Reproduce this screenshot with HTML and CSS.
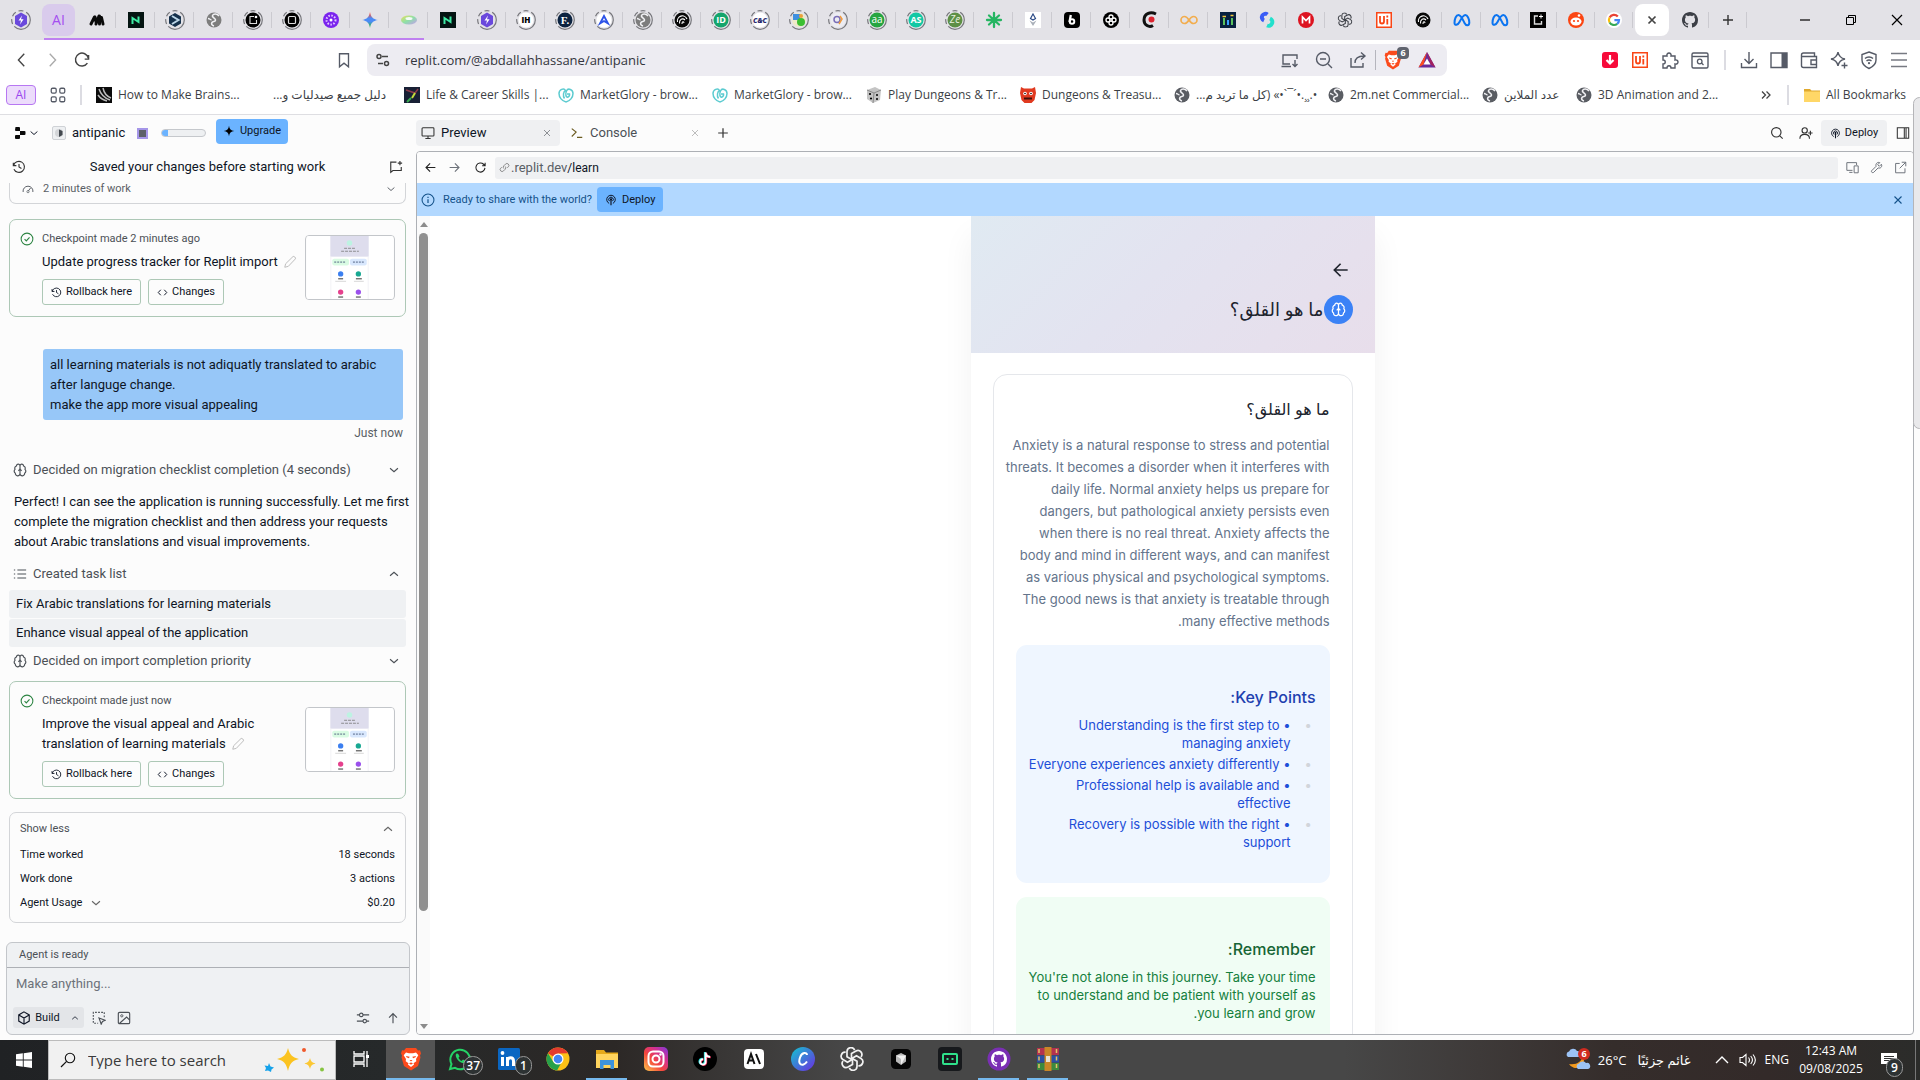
FILE: index.html
```html
<!DOCTYPE html>
<html lang="en">
<head>
<meta charset="utf-8">
<title>antipanic - Replit</title>
<link rel="stylesheet" href="styles.css">
</head>
<body>
<svg class="sprite" aria-hidden="true">
  <symbol id="ring" viewBox="0 0 20 20"><circle cx="10" cy="10" r="9.3" fill="none" stroke="#77777c" stroke-width="1.2" stroke-dasharray="22 3 5 3 5 3 5 3"/></symbol>
  <symbol id="globe" viewBox="0 0 20 20"><circle cx="10" cy="10" r="7.5" fill="currentColor"/><path d="M15 6c-2-2.500-5.500-2.500-6.500-.5s3 2.500 3 4.500-2.500 1-3.500 2.500 0 3 2 3.500" fill="none" stroke="#f1f1f4" stroke-width="1.600"/><path d="M4 8.500c1.500 0 2 1 3.500 1.500" fill="none" stroke="#f1f1f4" stroke-width="1.400"/></symbol>
  <symbol id="chev-down" viewBox="0 0 16 16"><path d="M3.500 6l4.500 4 4.500-4" fill="none" stroke="currentColor" stroke-width="1.300"/></symbol>
  <symbol id="chev-up" viewBox="0 0 16 16"><path d="M3.500 10l4.500-4 4.500 4" fill="none" stroke="currentColor" stroke-width="1.300"/></symbol>
  <symbol id="close" viewBox="0 0 16 16"><path d="M4 4l8 8M12 4l-8 8" fill="none" stroke="currentColor" stroke-width="1.300"/></symbol>
  <symbol id="plus" viewBox="0 0 16 16"><path d="M8 2.500v11M2.500 8h11" fill="none" stroke="currentColor" stroke-width="1.400"/></symbol>
  <symbol id="reload" viewBox="0 0 16 16"><path d="M13.500 8.500a5.600 5.600 0 1 1-1.700-4.500l1.700 1.600M13.700 2v3.800H10" fill="none" stroke="currentColor" stroke-width="1.300"/></symbol>
  <symbol id="arrow-left" viewBox="0 0 16 16"><path d="M14 8H2.500M7.500 3l-5 5 5 5" fill="none" stroke="currentColor" stroke-width="1.400"/></symbol>
  <symbol id="arrow-right" viewBox="0 0 16 16"><path d="M2 8h11.500M8.500 3l5 5-5 5" fill="none" stroke="currentColor" stroke-width="1.400"/></symbol>
  <symbol id="arrow-up" viewBox="0 0 16 16"><path d="M8 14V3M3.500 7.500L8 3l4.500 4.500" fill="none" stroke="currentColor" stroke-width="1.300"/></symbol>
  <symbol id="brain" viewBox="0 0 24 24"><path d="M12 5a3 3 0 1 0-5.997.125 4 4 0 0 0-2.526 5.770 4 4 0 0 0 .556 6.588A4 4 0 1 0 12 18ZM12 5a3 3 0 1 1 5.997.125 4 4 0 0 1 2.526 5.770 4 4 0 0 1-.556 6.588A4 4 0 1 1 12 18ZM9 13a4.500 4.500 0 0 0 3-4 4.500 4.500 0 0 0 3 4" fill="none" stroke="currentColor" stroke-width="2" stroke-linejoin="round"/></symbol>
  <symbol id="history" viewBox="0 0 16 16"><path d="M1.500 3v3.500H5M1.800 6.300A6.300 6.300 0 1 1 2.200 10.500M8 4.500V8l2.800 1.800" fill="none" stroke="currentColor" stroke-width="1.300"/></symbol>
  <symbol id="check" viewBox="0 0 16 16"><circle cx="8" cy="8" r="6.700" fill="none" stroke="currentColor" stroke-width="1.200"/><path d="M5.200 8.200l2 1.900 3.700-3.900" fill="none" stroke="currentColor" stroke-width="1.300"/></symbol>
  <symbol id="pencil" viewBox="0 0 16 16"><path d="M2 14l1-4L11.500 1.700c1-.7 3.500 1.500 2.700 2.700L6 13z" fill="none" stroke="currentColor" stroke-width="1.100"/></symbol>
  <symbol id="code" viewBox="0 0 16 16"><path d="M5.500 4L1.800 8l3.700 4M10.500 4l3.700 4-3.700 4" fill="none" stroke="currentColor" stroke-width="1.400"/></symbol>
  <symbol id="pin" viewBox="0 0 16 16"><path d="M5.500 12.500A5.700 5.700 0 1 1 10.500 12.500M6 9.500a3 3 0 1 1 4 0" fill="none" stroke="currentColor" stroke-width="1.300"/><path d="M8 6.500V15" stroke="currentColor" stroke-width="1.600"/><circle cx="8" cy="7" r="1.500" fill="currentColor"/></symbol>
  <symbol id="search" viewBox="0 0 16 16"><circle cx="7.200" cy="7.200" r="5.400" fill="none" stroke="currentColor" stroke-width="1.300"/><path d="M11.200 11.200l3.300 3.300" stroke="currentColor" stroke-width="1.300"/></symbol>
  <symbol id="brave" viewBox="0 0 24 24"><path d="M7 1h10l2 2.500 2-.3 1 3.300-1 2 .5 2-2.500 8.500L12 23.500 5 19 2.500 10.500 3 8.500 2 6.500l1-3.300 2 .3z" fill="#fb4a1c"/><path d="M7 5.500l3 .8h4l3-.8 2.300 2.800-2.300 3.700.3 2.200-2.800 2 .6 1.300L12 20l-3.100-2.500.6-1.300-2.800-2 .3-2.200-2.300-3.700z" fill="#fff"/><path d="M7 9l3.700.8-.8 1.500-2.400-1zM17 9l-3.700.8.8 1.500 2.400-1zM10.500 13h3l-1.500 1.500zM12 17.800l-2-1.500 2-.8 2 .8z" fill="#fb4a1c"/></symbol>
  <symbol id="github" viewBox="0 0 16 16"><path d="M8 0C3.580 0 0 3.580 0 8c0 3.540 2.290 6.530 5.470 7.590.4.070.55-.17.55-.38 0-.19-.01-.82-.01-1.490-2.010.37-2.530-.49-2.690-.94-.09-.23-.48-.94-.82-1.130-.28-.15-.68-.52-.01-.53.63-.01 1.080.58 1.230.82.72 1.210 1.870.87 2.330.66.07-.52.28-.87.51-1.070-1.780-.2-3.640-.89-3.640-3.950 0-.87.31-1.590.82-2.150-.08-.2-.36-1.020.08-2.120 0 0 .67-.21 2.200.82.640-.18 1.320-.27 2-.27s1.360.09 2 .27c1.530-1.040 2.200-.82 2.200-.82.440 1.100.160 1.920.080 2.120.51.560.82 1.270.82 2.150 0 3.070-1.870 3.750-3.650 3.950.29.25.54.73.54 1.480 0 1.070-.01 1.930-.01 2.200 0 .21.150.46.550.38A8.010 8.010 0 0 0 16 8c0-4.420-3.580-8-8-8z" fill="currentColor"/></symbol>
  <symbol id="gpt" viewBox="0 0 24 24"><g fill="none" stroke="currentColor" stroke-width="1.700"><path id="petal" d="M11.500 12.500V6.500l4.500-2.600a4 4 0 0 1 5 6"/><use href="#petal" transform="rotate(60 12 12)"/><use href="#petal" transform="rotate(120 12 12)"/><use href="#petal" transform="rotate(180 12 12)"/><use href="#petal" transform="rotate(240 12 12)"/><use href="#petal" transform="rotate(300 12 12)"/></g></symbol>
  <symbol id="meta" viewBox="0 0 20 20"><path d="M2.500 13c0-4 1.500-8 4-8s4.500 5 6 8 4.800 3 4.800-.5S15.500 5 13.300 5 9 9 7.500 12s-5 4-5 1z" fill="none" stroke="#0b74f1" stroke-width="2"/></symbol>
  <symbol id="bolt" viewBox="0 0 20 20"><path d="M10 2.500l6 3.500v8l-6 3.500L4 14V6z" fill="#6a49dc"/><path d="M11 5.500L7.500 10.500H10L9 14.500l3.600-5.200H10z" fill="#fff"/></symbol>
  <symbol id="nsq" viewBox="0 0 20 20"><path d="M2 2h16v16H2z" fill="#041412"/><path d="M6.500 14V8l6 4V6.500" fill="none" stroke="#3eeaa4" stroke-width="2"/></symbol>
  <symbol id="spiral" viewBox="0 0 20 20"><circle cx="10" cy="10" r="7.500" fill="#080808"/><path d="M5.500 12a5 5 0 0 1 9.500-3M7.500 13.500c-.5-4 3-6 5.500-3.500M10 14c0-2.500 1.500-3 2-1" fill="none" stroke="#fff" stroke-width="1.100"/></symbol>
  <symbol id="uibox" viewBox="0 0 20 20"><path d="M2 2h16v16H2z" fill="#fa4616"/><path d="M3.500 3.500h13v13h-13z" fill="#fff"/><path d="M4.500 4.500h11v11h-11z" fill="#fff"/><path d="M6 6v5.500a2 2 0 0 0 4 0V6M13.300 9v5.500M13.300 5.500v2" fill="none" stroke="#fa4616" stroke-width="1.800"/></symbol>
  <symbol id="mg" viewBox="0 0 18 18"><path d="M9 16C5 15 2 11.500 2 7.500S7 1.500 8.500 4.500c-2 1-3 5-1 8M9 16c4-1 7-4.500 7-8.500s-5-6-6.500-2.500C8 8 9 12 11 11s1.500-3 1.500-3H10" fill="none" stroke="#5ccbd0" stroke-width="1.500"/></symbol>
  <symbol id="phone" viewBox="0 0 88 64">
    <rect width="88" height="64" fill="#fff"/><rect x="24" width="39" height="21" fill="#dedded"/><circle cx="43.500" cy="7" r="2.800" fill="#bdf3e2"/>
    <path d="M38 12.500h11M35 15.500h18" stroke="#777" stroke-width=".8" stroke-dasharray="3 1"/>
    <rect x="26" y="23" width="17" height="7" rx="2" fill="#d9fbe3"/><rect x="44" y="23" width="17" height="7" rx="2" fill="#d8e7fd"/>
    <path d="M28 26.500h11M47 26.500h11" stroke="#457" stroke-width=".9" stroke-dasharray="2 1"/>
    <circle cx="34.500" cy="38.500" r="2.700" fill="#3b7ff0"/><circle cx="52.500" cy="38.500" r="2.700" fill="#18a892"/>
    <path d="M32 43.500h5M50 43.500h6" stroke="#333"/><path d="M29 46h11M48 46h10" stroke="#ccc" stroke-width=".8"/>
    <circle cx="34.500" cy="57" r="2.700" fill="#e5408d"/><circle cx="52.500" cy="57" r="2.700" fill="#9b50ec"/><path d="M32 62h5M50 62h5" stroke="#333"/>
    <path d="M24.500 21v43M62.500 21v43" stroke="#f3f3f6"/>
  </symbol>
  <linearGradient id="insta" x1="0" y1="1" x2="1" y2="0"><stop offset="0" stop-color="#fdc94b"/><stop offset=".4" stop-color="#f4463c"/><stop offset=".7" stop-color="#d22f92"/><stop offset="1" stop-color="#7a3be0"/></linearGradient>
  <linearGradient id="canvag" x1="0" y1="0" x2="1" y2="1"><stop offset="0" stop-color="#12c6cf"/><stop offset="1" stop-color="#6d2be0"/></linearGradient>
  <linearGradient id="gem" x1="0" y1="0" x2="0" y2="1"><stop offset=".1" stop-color="#f5503f"/><stop offset=".4" stop-color="#4b8bf5"/><stop offset=".6" stop-color="#4b8bf5"/><stop offset=".9" stop-color="#2fb457"/></linearGradient>
  <linearGradient id="pastel" x1="0" y1="0" x2="1" y2="1"><stop offset="0" stop-color="#e8e05c"/><stop offset=".5" stop-color="#8de0a8"/><stop offset="1" stop-color="#c89af2"/></linearGradient>
</svg>

<header class="browser">
  <nav class="tabs" aria-label="Tabs">
    <button class="tab first"><svg><use href="#ring"/><use href="#bolt"/></svg></button>
    <button class="group">AI</button>
    <div class="tab-run">
      <button class="tab"><svg viewBox="0 0 20 20"><path d="M4 14L7.500 7M9 14l3-8M14.500 7.500L16 14M8 7l1 5M12.500 6v8" stroke="#0a0a0a" stroke-width="3" stroke-linecap="round"/></svg></button>
      <button class="tab"><svg><use href="#nsq"/></svg></button>
      <button class="tab"><svg viewBox="0 0 20 20"><use href="#ring"/><path d="M10 3l6 3.500v7L10 17l-6-3.500v-7z" fill="#15304b"/><path d="M7 6l6.500 4L7 14" fill="none" stroke="#bcd6e8" stroke-width="2"/></svg></button>
      <button class="tab grey"><svg><use href="#globe"/></svg></button>
      <button class="tab"><svg viewBox="0 0 20 20"><use href="#ring"/><circle cx="10" cy="10" r="7.500"/><path d="M11 6.500H7v7h6.500V10" fill="none" stroke="#ddd" stroke-width="1.100"/><circle cx="13" cy="7" r="1.300" fill="#fff"/></svg></button>
      <button class="tab"><svg viewBox="0 0 20 20"><use href="#ring"/><circle cx="10" cy="10" r="7.500"/><rect x="6.500" y="6.500" width="7" height="7" rx="1" fill="none" stroke="#ddd" stroke-width="1.200"/></svg></button>
      <button class="tab"><svg viewBox="0 0 20 20"><circle cx="10" cy="10" r="8" fill="#7a23ee"/><circle cx="10" cy="10" r="4.500" fill="none" stroke="#e3c8ff" stroke-width="2" stroke-dasharray="1.500 1.500"/><circle cx="10" cy="10" r="1.500" fill="#fff"/></svg></button>
      <button class="tab"><svg viewBox="0 0 20 20"><path d="M10 2c.8 5 3 7.200 8 8-5 .8-7.200 3-8 8-.8-5-3-7.200-8-8 5-.8 7.200-3 8-8z" fill="url(#gem)"/></svg></button>
      <button class="tab"><svg viewBox="0 0 20 20"><ellipse cx="10" cy="10" rx="8" ry="4.500" fill="url(#pastel)"/><ellipse cx="10" cy="8.500" rx="3.500" ry="1.500" fill="#f3fbf5"/></svg></button>
      <button class="tab"><svg><use href="#nsq"/></svg></button>
      <button class="tab"><svg><use href="#ring"/><use href="#bolt"/></svg></button>
      <button class="tab"><svg viewBox="0 0 20 20"><circle cx="10" cy="10" r="7.500" fill="#fff"/><use href="#ring"/><text x="10" y="13" font-size="8" font-weight="900" text-anchor="middle">IH</text></svg></button>
      <button class="tab"><svg viewBox="0 0 20 20"><circle cx="10" cy="10" r="7.500" fill="#0c2340"/><use href="#ring"/><text x="10" y="14" font-size="11" font-weight="700" fill="#fff" text-anchor="middle" font-family="Liberation Serif">F.</text></svg></button>
      <button class="tab"><svg viewBox="0 0 20 20"><circle cx="10" cy="10" r="7.500" fill="#fff"/><use href="#ring"/><path d="M6 13.500L10 6l4 7.500-4-2.500z" fill="none" stroke="#2d53e8" stroke-width="1.800"/></svg></button>
      <button class="tab grey"><svg><use href="#ring"/><use href="#globe"/></svg></button>
      <button class="tab"><svg><use href="#ring"/><use href="#spiral"/></svg></button>
      <button class="tab"><svg viewBox="0 0 20 20"><circle cx="10" cy="10" r="7.500" fill="#14a56c"/><use href="#ring"/><text x="10" y="13.300" font-size="9" font-weight="700" fill="#fff" text-anchor="middle">ID</text></svg></button>
      <button class="tab"><svg viewBox="0 0 20 20"><circle cx="10" cy="10" r="7.500" fill="#fff"/><use href="#ring"/><text x="10" y="12.500" font-size="7" font-weight="900" font-style="italic" fill="#292a6e" text-anchor="middle">C&amp;C</text></svg></button>
      <button class="tab"><svg viewBox="0 0 20 20"><circle cx="10" cy="10" r="7" fill="#efe9c8"/><use href="#ring"/><rect x="4" y="4" width="7" height="6" fill="#3f8fe0"/><circle cx="12" cy="12" r="4" fill="#3bbf32"/><circle cx="12" cy="6" r="2" fill="#eaa03a"/></svg></button>
      <button class="tab"><svg viewBox="0 0 20 20"><circle cx="10" cy="10" r="7.500" fill="#ececf2"/><use href="#ring"/><circle cx="9" cy="9.500" r="3" fill="none" stroke="#7a6fb8" stroke-width="1.500"/><path d="M12 6l2 3-3 5" fill="none" stroke="#ef9a3c" stroke-width="1.500"/></svg></button>
      <button class="tab"><svg viewBox="0 0 20 20"><circle cx="10" cy="10" r="7.500" fill="#26a541"/><use href="#ring"/><text x="10" y="13" font-size="10" fill="#fff" text-anchor="middle">aa</text></svg></button>
      <button class="tab"><svg viewBox="0 0 20 20"><circle cx="10" cy="10" r="7.500" fill="#12c8a4"/><use href="#ring"/><text x="10" y="13.300" font-size="9" font-weight="700" fill="#fff" text-anchor="middle">AS</text></svg></button>
      <button class="tab"><svg viewBox="0 0 20 20"><circle cx="10" cy="10" r="7.500" fill="#5d8f45"/><use href="#ring"/><text x="10" y="13.300" font-size="10" font-style="italic" fill="#e6efdf" text-anchor="middle">Ze</text></svg></button>
      <button class="tab"><svg viewBox="0 0 20 20"><path d="M10 3v14M3 10h14M5 5.500l10 9M15 5.500l-10 9" stroke="#25b562" stroke-width="2.300" stroke-linecap="round"/></svg></button>
      <button class="tab"><svg viewBox="0 0 20 20"><path d="M2 2h16v16H2z" fill="#fff"/><path d="M10 4l2.500 4.500L10 10 7.500 8.500z" fill="none" stroke="#2b4a86" stroke-width="1.200"/><path d="M6.500 10.500L10 12.500l3.500-2L10 16z" fill="#a9afb8"/></svg></button>
      <button class="tab"><svg viewBox="0 0 20 20"><rect x="2" y="2" width="16" height="16" rx="4"/><path d="M8.800 5L7.500 12" stroke="#fff" stroke-width="2.300"/><circle cx="10" cy="11.500" r="2.300" fill="none" stroke="#fff" stroke-width="1.900"/></svg></button>
      <button class="tab"><svg viewBox="0 0 20 20"><circle cx="10" cy="10" r="8"/><g fill="none" stroke="#fff" stroke-width="1.300"><circle cx="10" cy="7" r="2"/><circle cx="10" cy="13" r="2"/><circle cx="7" cy="10" r="2"/><circle cx="13" cy="10" r="2"/></g></svg></button>
      <button class="tab"><svg viewBox="0 0 20 20"><path d="M16 4C10 1 4 4 4 10c0 5 5 8 9 5.500" fill="none" stroke="#111" stroke-width="3"/><circle cx="11.500" cy="9.500" r="3" fill="#dc2430"/></svg></button>
      <button class="tab"><svg viewBox="0 0 20 20"><path d="M10 10C8 7 7 6.500 5.500 6.500a3.500 3.500 0 0 0 0 7C7 13.500 8 13 10 10s3-3.500 4.500-3.500a3.500 3.500 0 0 1 0 7C13 13.500 12 13 10 10z" fill="none" stroke="#f2ad4e" stroke-width="1.700"/></svg></button>
      <button class="tab"><svg viewBox="0 0 20 20"><path d="M2 2h16v16H2z" fill="#07203f"/><path d="M6 15V8M14 15V8" stroke="#5ac25e" stroke-width="2"/><path d="M4.500 6.500H8M12.500 5.500h3" stroke="#f3c63c" stroke-width="1.500"/><path d="M10 15v-5" stroke="#3aa0ff" stroke-width="2"/></svg></button>
      <button class="tab"><svg viewBox="0 0 20 20"><path d="M10.500 4.500A3.500 3.500 0 1 0 7 10.500" fill="none" stroke="#3a5cf6" stroke-width="4"/><path d="M13 8.500a3.700 3.700 0 1 1-3 7" fill="none" stroke="#23e0cc" stroke-width="4"/></svg></button>
      <button class="tab"><svg viewBox="0 0 20 20"><circle cx="10" cy="10" r="8" fill="#dd1421"/><path d="M6.500 13.500V7l3.500 3.500L13.500 7v6.500" fill="none" stroke="#fff" stroke-width="1.700"/></svg></button>
      <button class="tab"><svg viewBox="-4 -4 32 32"><use href="#gpt" width="24" height="24"/></svg></button>
      <button class="tab"><svg><use href="#uibox"/></svg></button>
      <button class="tab"><svg><use href="#spiral"/></svg></button>
      <button class="tab"><svg><use href="#meta"/></svg></button>
      <button class="tab tight"><svg><use href="#meta"/></svg></button>
      <button class="tab tight"><svg viewBox="0 0 20 20"><path d="M2 2h16v16H2z"/><path d="M10 6H6.500v8h7v-3" fill="none" stroke="#ddd" stroke-width="1.400"/><path d="M13 4.500v4M11 6.500h4" stroke="#fff"/></svg></button>
      <button class="tab tight"><svg viewBox="0 0 20 20"><circle cx="10" cy="10" r="8" fill="#fb4512"/><ellipse cx="10" cy="11.500" rx="5.500" ry="4" fill="#fff"/><circle cx="8" cy="11" r="1.100" fill="#fb4512"/><circle cx="12" cy="11" r="1.100" fill="#fb4512"/><circle cx="13" cy="5.500" r="1.300" fill="#fff"/></svg></button>
      <button class="tab tight"><svg viewBox="0 0 20 20"><circle cx="10" cy="10" r="8" fill="#fff"/><g fill="none" stroke-width="2.200"><path d="M13.800 6.500A5 5 0 0 0 5.600 7.500" stroke="#e94235"/><path d="M5.600 7.500a5 5 0 0 0 0 5" stroke="#fabb05"/><path d="M5.600 12.500a5 5 0 0 0 7.600 1.300" stroke="#34a853"/><path d="M13.200 13.800A4.500 4.500 0 0 0 15 10.200h-4.600" stroke="#4285f4"/></g></svg></button>
      <button class="tab tight active" aria-label="Close"><svg viewBox="0 0 20 20"><path d="M6.500 6.500l7 7M13.500 6.500l-7 7" stroke="#444" stroke-width="1.700"/></svg></button>
      <button class="tab tight"><svg viewBox="-2 -2 20 20"><use href="#github" width="16" height="16"/></svg></button>
      <button class="tab tight"><svg viewBox="0 0 20 20"><path d="M10 5v10M5 10h10" stroke="#333" stroke-width="1.400"/></svg></button>
    </div>
    <div class="window-controls">
      <button aria-label="Minimize"><svg viewBox="0 0 16 16"><path d="M3 8h10" stroke="#000" stroke-width="1.200"/></svg></button>
      <button aria-label="Restore"><svg viewBox="0 0 16 16"><path d="M3.500 5.500h7v7h-7zM5.500 5.500v-2h7v7h-2" fill="none" stroke="#000"/></svg></button>
      <button aria-label="Close window"><svg viewBox="0 0 16 16"><path d="M3 3l10 10M13 3L3 13" stroke="#000" stroke-width="1.200"/></svg></button>
    </div>
  </nav>

  <div class="toolbar">
    <button class="tool" aria-label="Back"><svg viewBox="0 0 20 20"><path d="M12.500 3L6 10l6.500 7" fill="none" stroke="#444" stroke-width="1.500"/></svg></button>
    <button class="tool" aria-label="Forward"><svg viewBox="0 0 20 20"><path d="M7.500 3l6.500 7-6.500 7" fill="none" stroke="#aaa" stroke-width="1.500"/></svg></button>
    <button class="tool" aria-label="Reload"><svg viewBox="0 0 20 20"><path d="M16 13.500A7.200 7.200 0 1 1 17 8M17.300 4.500V9H13" fill="none" stroke="#444" stroke-width="1.600"/></svg></button>
    <button class="tool mark" aria-label="Bookmark"><svg viewBox="0 0 20 20"><path d="M5 3h10v14.500l-5-4-5 4z" fill="none" stroke="#555a66" stroke-width="1.500"/></svg></button>
    <div class="address">
      <svg viewBox="0 0 20 20"><g fill="none" stroke="#444" stroke-width="1.500"><circle cx="6" cy="6.500" r="2"/><path d="M9 6.500h6M5 13.500h5"/><circle cx="13.500" cy="13.500" r="2"/></g></svg>
      <input aria-label="Address" value="replit.com/@abdallahhassane/antipanic">
      <button class="wide"><svg viewBox="0 0 20 20"><path d="M17 9V5H3v9h7M1.500 16.500H11M15 10v6M12.500 14l2.500 2.500 2.500-2.500" fill="none" stroke="#555a66" stroke-width="1.400"/></svg></button>
      <button class="wide"><svg viewBox="0 0 20 20"><circle cx="9" cy="9" r="6.500" fill="none" stroke="#555a66" stroke-width="1.400"/><path d="M6 9h6M14 14l4 4" stroke="#555a66" stroke-width="1.400"/></svg></button>
      <button class="wide"><svg viewBox="0 0 20 20"><path d="M3 8v9h12v-4M7 13c0-5 3-7 9-7M13 2.500L17 6l-4 3.500" fill="none" stroke="#555a66" stroke-width="1.400"/></svg></button>
      <span class="bar-line"></span>
      <button class="wide shield"><svg class="big"><use href="#brave"/></svg><span class="count">6</span></button>
      <button class="wide"><svg viewBox="0 0 20 20"><path d="M10 2L1.500 17.500h17z" fill="#6a2b98"/><path d="M10 2L1.500 17.500l5-3z" fill="#ff4c1f"/><path d="M10 2l8.500 15.500-5-3z" fill="#a3205f"/><path d="M10 8.500l-3.500 6h7z" fill="#fff"/></svg></button>
    </div>
    <div class="extensions">
      <button><svg viewBox="0 0 20 20"><rect x="2" y="2" width="16" height="16" rx="3" fill="#f70a3a"/><path d="M10 5v8M6.500 10l3.500 3.500 3.500-3.500" fill="none" stroke="#fff" stroke-width="2.200"/></svg></button>
      <button><svg><use href="#uibox"/></svg></button>
      <button><svg viewBox="0 0 20 20"><path d="M3 6h4c-1-4 5-4 4 0h4v4c4-1 4 5 0 4v4h-4c0-3-4-3-4 0H3v-4c3 0 3-4 0-4z" fill="none" stroke="#555a66" stroke-width="1.400"/></svg></button>
      <button><svg viewBox="0 0 20 20"><rect x="2" y="3" width="16" height="15" rx="1.500" fill="none" stroke="#555a66" stroke-width="1.400"/><path d="M2 6.500h16" stroke="#555a66" stroke-width="1.400"/><circle cx="9.700" cy="11.500" r="2.300" fill="none" stroke="#555a66" stroke-width="1.300"/><path d="M11.500 13l2 2" stroke="#555a66" stroke-width="1.300"/></svg></button>
      <span class="bar-line light"></span>
      <button><svg viewBox="0 0 20 20"><path d="M10 2v11M5.500 9l4.500 4.500L14.500 9M2.500 13v4.500h15V13" fill="none" stroke="#555a66" stroke-width="1.400"/></svg></button>
      <button><svg viewBox="0 0 20 20"><path d="M2 3h16v14.500H2z" fill="none" stroke="#555a66" stroke-width="1.400"/><path d="M12.500 3H18v14.500h-5.500z" fill="#555a66"/></svg></button>
      <button><svg viewBox="0 0 20 20"><path d="M3 6.500h14.500v11H4.500c-1 0-2-1-2-2V5c0-1 1-2 2-2h11v3.500M17.500 10H12v4.500h5.500" fill="none" stroke="#555a66" stroke-width="1.400"/></svg></button>
      <button><svg viewBox="0 0 20 20"><path d="M9 2c.8 4.500 2.500 6.200 7 7-4.500.8-6.200 2.500-7 7-.8-4.500-2.500-6.200-7-7 4.500-.8 6.200-2.500 7-7zM15.500 12.500v6M12.500 15.500h6" fill="none" stroke="#555a66" stroke-width="1.400"/></svg></button>
      <button><svg viewBox="0 0 20 20"><path d="M10 2l7 2.500V10c0 4-3.500 7-7 8.500C6.500 17 3 14 3 10V4.500zM6 8.500c2-2 6-2 8 0M7.500 11c1.500-1.300 3.500-1.300 5 0" fill="none" stroke="#555a66" stroke-width="1.400"/><circle cx="10" cy="13.200" r="1.100" fill="#555a66"/></svg></button>
      <button><svg viewBox="0 0 20 20"><path d="M2 3.500h16M2 10h16M2 16.500h16" stroke="#777a82" stroke-width="1.600"/></svg></button>
    </div>
  </div>

  <nav class="bookmarks" aria-label="Bookmarks">
    <button class="ai-chip">AI</button>
    <button class="grid-btn"><svg viewBox="0 0 20 20"><g fill="none" stroke="#555a66" stroke-width="1.400"><rect x="2.500" y="2.500" width="5.500" height="5.500" rx="1.500"/><rect x="12" y="2.500" width="5.500" height="5.500" rx="1.500"/><rect x="2.500" y="12" width="5.500" height="5.500" rx="1.500"/><rect x="12" y="12" width="5.500" height="5.500" rx="1.500"/></g></svg></button>
    <span class="bar-line light"></span>
    <div class="marks">
      <a href="#"><svg viewBox="0 0 18 18"><path d="M1 1h16v16H1z" fill="#0b0b0b"/><path d="M4 3c2 6 5 9 11 11M8 2c1 5 3 8 8 10M3 9c2 3 5 5 9 6" fill="none" stroke="#bbb" stroke-width="1.500"/></svg>How to Make Brains...</a>
      <a href="#" class="no-icon" dir="rtl">دليل جميع صيدليات و...</a>
      <a href="#"><svg viewBox="0 0 18 18"><path d="M1 1h16v16H1z" fill="#182035"/><path d="M3 4l9 3 3-4" stroke="#8a3a4a" stroke-width="1.500" fill="none"/><path d="M12 7l-3 5" stroke="#c3dd3c" stroke-width="2"/><path d="M8 12l-4 4" stroke="#36a94f" stroke-width="2"/></svg>Life &amp; Career Skills |...</a>
      <a href="#"><svg><use href="#mg"/></svg>MarketGlory - brow...</a>
      <a href="#"><svg><use href="#mg"/></svg>MarketGlory - brow...</a>
      <a href="#"><svg viewBox="0 0 18 18"><path d="M2 4l8-3 6 3-1 10-7 3-6-4z" fill="#c4c4c4"/><path d="M2 4l7 3 7-3M9 7l-1 10" stroke="#8a8a8a" fill="none"/><circle cx="5" cy="8" r="1.100"/><circle cx="6" cy="12.500" r="1.100"/><circle cx="12" cy="9" r="1"/><circle cx="12" cy="13" r="1"/></svg>Play Dungeons &amp; Tr...</a>
      <a href="#"><svg viewBox="0 0 18 18"><path d="M2 1l3 1.500h8L16 1l1 6-1.500 7-3 3h-7l-3-3L1 7z" fill="#e03a20"/><circle cx="6" cy="7.500" r="1.800" fill="#fff"/><circle cx="12" cy="7.500" r="1.800" fill="#fff"/><circle cx="6" cy="7.500" r=".8"/><circle cx="12" cy="7.500" r=".8"/><path d="M5 12.500h8" stroke="#40100a" stroke-width="2"/></svg>Dungeons &amp; Treasu...</a>
      <a href="#" class="grey"><svg viewBox="0 0 18 18"><use href="#globe" x="-1" y="-1" width="20" height="20"/></svg><span dir="rtl">•.¸¸.•´¯`•» (كل ما تريد م...</span></a>
      <a href="#" class="grey"><svg viewBox="0 0 18 18"><use href="#globe" x="-1" y="-1" width="20" height="20"/></svg>2m.net Commercial...</a>
      <a href="#" class="grey short"><svg viewBox="0 0 18 18"><use href="#globe" x="-1" y="-1" width="20" height="20"/></svg><span>عدد الملاين</span></a>
      <a href="#" class="grey"><svg viewBox="0 0 18 18"><use href="#globe" x="-1" y="-1" width="20" height="20"/></svg>3D Animation and 2...</a>
    </div>
    <button class="more"><svg viewBox="0 0 16 16"><path d="M4 4.500L7.500 8 4 11.500M8.500 4.500L12 8l-3.500 3.500" fill="none" stroke="#444" stroke-width="1.300"/></svg></button>
    <span class="bar-line light"></span>
    <a href="#" class="all"><svg viewBox="0 0 18 18"><path d="M1 3h6l1.500 1.500H17V16H1z" fill="#e0a92e"/><path d="M1 5.500h16V16H1z" fill="#ffd767"/></svg>All Bookmarks</a>
  </nav>
</header>

<div class="page-scroll"></div>

<main class="app">
  <aside class="sidebar">
    <div class="project">
      <svg class="logo" viewBox="0 0 12 14"><path d="M1.500 1H5a1 1 0 0 1 1 1v3H2a1 1 0 0 1-1-1zM6 5h4.500a1 1 0 0 1 1 1v2a1 1 0 0 1-1 1H6zM1 10a1 1 0 0 1 1-1h4v3a1 1 0 0 1-1 1H2a1 1 0 0 1-1-1z" fill="#0b0b0b"/></svg>
      <svg class="s12"><use href="#chev-down"/></svg>
      <span class="app-icon"><svg viewBox="0 0 10 10"><circle cx="5" cy="5" r="4" fill="#d3d5d8"/><path d="M5 1.500L8.500 3v4L5 9z" fill="#444a50"/></svg></span>
      <span class="app-name">antipanic</span>
      <span class="square"></span>
      <span class="meter"><span></span></span>
      <button class="blue-btn upgrade"><svg viewBox="0 0 16 16"><path d="M8 1c.6 4.500 2.500 6.400 7 7-4.500.6-6.400 2.500-7 7-.6-4.500-2.500-6.400-7-7 4.500-.6 6.400-2.500 7-7z"/></svg>Upgrade</button>
    </div>
    <div class="chat-title">
      <svg><use href="#history"/></svg>
      <h1>Saved your changes before starting work</h1>
      <svg viewBox="0 0 16 16"><path d="M8.500 2.500H2v11.500l2.500-2H14V8M12.500 1v5M10 3.500h5" fill="none" stroke="#333" stroke-width="1.300"/></svg>
    </div>

    <section class="chat">
      <div class="card worked">
        <svg viewBox="0 0 16 16"><path d="M1.500 12a6.600 6.600 0 1 1 13 0M8.500 10.500l3-4" fill="none" stroke="currentColor" stroke-width="1.300"/><circle cx="8" cy="11.500" r="1.500" fill="none" stroke="currentColor"/></svg>
        <span>2 minutes of work</span><svg class="end"><use href="#chev-down"/></svg>
      </div>

      <article class="card checkpoint">
        <svg class="ok"><use href="#check"/></svg>
        <div class="cp-body">
          <p class="cp-meta">Checkpoint made 2 minutes ago</p>
          <p class="cp-title">Update progress tracker for Replit import <svg class="pen"><use href="#pencil"/></svg></p>
          <div class="cp-actions"><button><svg><use href="#history"/></svg>Rollback here</button><button><svg><use href="#code"/></svg>Changes</button></div>
        </div>
        <svg class="thumb"><use href="#phone"/></svg>
      </article>

      <div class="message">
        <p>all learning materials is not adiquatly translated to arabic<br>after languge change.<br>make the app more visual appealing</p>
        <time>Just now</time>
      </div>

      <div class="step"><svg><use href="#brain"/></svg><span>Decided on migration checklist completion (4 seconds)</span><svg class="end"><use href="#chev-down"/></svg></div>
      <p class="reply">Perfect! I can see the application is running successfully. Let me first<br>complete the migration checklist and then address your requests<br>about Arabic translations and visual improvements.</p>
      <div class="step"><svg viewBox="0 0 16 16"><path d="M5 3.500h10M5 8h10M5 12.500h10" stroke="currentColor" stroke-width="1.200"/><path d="M1 3.500h1.500M1 8h1.500M1 12.500h1.500" stroke="currentColor" stroke-width="1.200"/></svg><span>Created task list</span><svg class="end"><use href="#chev-up"/></svg></div>
      <ul class="tasks"><li>Fix Arabic translations for learning materials</li><li>Enhance visual appeal of the application</li></ul>
      <div class="step"><svg><use href="#brain"/></svg><span>Decided on import completion priority</span><svg class="end"><use href="#chev-down"/></svg></div>

      <article class="card checkpoint second">
        <svg class="ok"><use href="#check"/></svg>
        <div class="cp-body">
          <p class="cp-meta">Checkpoint made just now</p>
          <p class="cp-title">Improve the visual appeal and Arabic<br>translation of learning materials <svg class="pen"><use href="#pencil"/></svg></p>
          <div class="cp-actions"><button><svg><use href="#history"/></svg>Rollback here</button><button><svg><use href="#code"/></svg>Changes</button></div>
        </div>
        <svg class="thumb"><use href="#phone"/></svg>
      </article>

      <div class="card usage">
        <div class="row muted"><span>Show less</span><svg><use href="#chev-up"/></svg></div>
        <div class="row"><span>Time worked</span><span>18 seconds</span></div>
        <div class="row"><span>Work done</span><span>3 actions</span></div>
        <div class="row"><span>Agent Usage <svg><use href="#chev-down"/></svg></span><span>$0.20</span></div>
      </div>
    </section>

    <form class="composer">
      <label for="prompt">Agent is ready</label>
      <div class="composer-box">
        <input id="prompt" placeholder="Make anything...">
        <div class="composer-tools">
          <button type="button" class="build"><svg viewBox="0 0 16 16"><path d="M8 1l6 3.500v7L8 15l-6-3.500v-7zM2 4.500L8 8l6-3.500M8 8v7" fill="none" stroke="currentColor" stroke-width="1.300"/></svg>Build<svg class="s12"><use href="#chev-up"/></svg></button>
          <button type="button"><svg viewBox="0 0 16 16"><path d="M14 7V1.500H1.500V14H7" fill="none" stroke="currentColor" stroke-width="1.300" stroke-dasharray="2 1.500"/><path d="M8 8l7 2.500-3 1.500-1.500 3z" fill="none" stroke="currentColor" stroke-width="1.300"/></svg></button>
          <button type="button"><svg viewBox="0 0 16 16"><rect x="1.500" y="1.500" width="13" height="13" rx="1.500" fill="none" stroke="currentColor" stroke-width="1.300"/><circle cx="5.500" cy="5.500" r="1.300" fill="none" stroke="currentColor"/><path d="M3 14l8-7 3.500 3.500" fill="none" stroke="currentColor" stroke-width="1.300"/></svg></button>
          <button type="button" class="push"><svg viewBox="0 0 16 16"><g fill="none" stroke="currentColor" stroke-width="1.300"><path d="M1 4.500h3M8 4.500h7M1 11.500h7M12 11.500h3"/><circle cx="6" cy="4.500" r="2"/><circle cx="10" cy="11.500" r="2"/></g></svg></button>
          <button type="button"><svg><use href="#arrow-up"/></svg></button>
        </div>
      </div>
    </form>
  </aside>

  <section class="workspace">
    <div class="panes">
      <button class="pane-tab on"><svg viewBox="0 0 16 16"><rect x="1.200" y="2" width="13.600" height="9.500" rx="1" fill="none" stroke="#333" stroke-width="1.200"/><path d="M8 11.500V14M5 14.200h6" stroke="#333" stroke-width="1.200"/></svg>Preview<svg class="x s12"><use href="#close"/></svg></button>
      <button class="pane-tab"><svg viewBox="0 0 16 16"><path d="M2 3l5 4-5 5M8 13h6" fill="none" stroke="#6b5b20" stroke-width="1.300"/></svg>Console<svg class="x s12 faint"><use href="#close"/></svg></button>
      <button class="icon-btn add"><svg><use href="#plus"/></svg></button>
      <div class="pane-right">
        <button class="icon-btn"><svg><use href="#search"/></svg></button>
        <button class="icon-btn"><svg viewBox="0 0 16 16"><circle cx="6.500" cy="5" r="3" fill="none" stroke="#333" stroke-width="1.300"/><path d="M1 14.500c0-6.500 11-6.500 11 0M13 5.500v5M10.500 8h5" fill="none" stroke="#333" stroke-width="1.300"/></svg></button>
        <button class="deploy"><svg><use href="#pin"/></svg>Deploy</button>
        <button class="icon-btn"><svg viewBox="0 0 16 16"><path d="M1.500 2h13v12h-13zM9.500 2v12M11.500 2v12" fill="none" stroke="#333" stroke-width="1.200"/></svg></button>
      </div>
    </div>

    <div class="webview">
      <div class="urlbar">
        <button><svg><use href="#arrow-left"/></svg></button>
        <button class="dim"><svg><use href="#arrow-right"/></svg></button>
        <button class="again"><svg><use href="#reload"/></svg></button>
        <div class="url"><svg viewBox="0 0 16 16"><g fill="none" stroke="#777" stroke-width="1.200"><path d="M7 9.500a2.800 2.800 0 0 1 0-4l2.500-2.500a2.800 2.800 0 0 1 4 4L12 8.500"/><path d="M9 6.500a2.800 2.800 0 0 1 0 4L6.500 13a2.800 2.800 0 0 1-4-4L4 7.500"/></g></svg><span>.replit.dev</span><b>/learn</b></div>
        <button class="dim"><svg viewBox="0 0 16 16"><path d="M8 11.500H1V2h12v3M4 14h4M10 6h5v8.500h-5z" fill="none" stroke="currentColor" stroke-width="1.200"/></svg></button>
        <button class="dim"><svg viewBox="0 0 16 16"><path d="M14 4l-2.500 2.500-2-2L12 2C9 .8 6.500 3.500 7.500 6.500L2 12c-1 1.500 1 3 2.500 2L10 8.500c3 1 5.500-1.500 4-4.500z" fill="none" stroke="currentColor" stroke-width="1.200"/></svg></button>
        <button class="dim"><svg viewBox="0 0 16 16"><path d="M7 3H2v11.500h11.500V9M9.500 1.500h5v5M14.500 1.500L7 9" fill="none" stroke="currentColor" stroke-width="1.200"/></svg></button>
      </div>
      <div class="banner">
        <svg viewBox="0 0 16 16"><circle cx="8" cy="8" r="6.800" fill="none" stroke="currentColor" stroke-width="1.200"/><path d="M8 7v4.500M8 4.300v1.500" stroke="currentColor" stroke-width="1.400"/></svg>
        <span>Ready to share with the world?</span>
        <button class="blue-btn"><svg><use href="#pin"/></svg>Deploy</button>
        <button class="dismiss" aria-label="Dismiss"><svg><use href="#close"/></svg></button>
      </div>
      <div class="frame">
        <div class="track"><i class="up"></i><i class="thumb-bar"></i><i class="down"></i></div>
        <div class="canvas">
          <div class="phone" dir="rtl">
            <div class="hero">
              <button class="back" aria-label="Back"><svg viewBox="0 0 24 24"><path d="M20 12H4.500M11.500 4.500L4 12l7.500 7.500" fill="none" stroke="#20242e" stroke-width="2"/></svg></button>
              <div class="hero-title"><span class="badge"><svg><use href="#brain"/></svg></span><h2>ما هو القلق؟</h2></div>
            </div>
            <div class="lesson">
              <h3>ما هو القلق؟</h3>
              <p class="body">Anxiety is a natural response to stress and potential<br>threats. It becomes a disorder when it interferes with<br>daily life. Normal anxiety helps us prepare for<br>dangers, but pathological anxiety persists even<br>when there is no real threat. Anxiety affects the<br>body and mind in different ways, and can manifest<br><span dir="ltr">as various physical and psychological symptoms.</span><br>The good news is that anxiety is treatable through<br>many effective methods.</p>
              <div class="tip blue">
                <h4>Key Points:</h4>
                <ul>
                  <li>• Understanding is the first step to<br>managing anxiety</li>
                  <li>• Everyone experiences anxiety differently</li>
                  <li>• Professional help is available and<br>effective</li>
                  <li>• Recovery is possible with the right<br>support</li>
                </ul>
              </div>
              <div class="tip green">
                <h4>Remember:</h4>
                <p>You're not alone in this journey. Take your time<br>to understand and be patient with yourself as<br>you learn and grow.</p>
              </div>
            </div>
          </div>
        </div>
      </div>
    </div>
  </section>
</main>

<footer class="taskbar">
  <button class="start" aria-label="Start"><svg viewBox="0 0 16 16"><path d="M0 2.200L6.800 1.300v6.300H0zM7.700 1.200L16 0v7.600H7.700zM0 8.400h6.800v6.300L0 13.800zM7.700 8.400H16V16l-8.300-1.200z" fill="#fff"/></svg></button>
  <label class="find">
    <svg viewBox="0 0 16 16"><circle cx="10" cy="6" r="4.700" fill="none" stroke="#111" stroke-width="1.100"/><path d="M6.600 9.400L1 15" stroke="#111" stroke-width="1.200"/></svg>
    <input placeholder="Type here to search">
    <svg class="sparkles" viewBox="0 0 64 28"><path d="M26 2c2 7 4 9 11 11-7 2-9 4-11 12-2-8-4-10-11-12 7-2 9-4 11-11z" fill="#fbc320"/><path d="M48 12c1 3.500 2 4.500 5.500 5.500-3.500 1-4.500 2-5.500 5.500-1-3.500-2-4.500-5.500-5.500 3.500-1 4.500-2 5.500-5.500z" fill="#fbc733"/><path d="M7 17l1.500 3.500 3.500 1-2.500 2L9 26l-3-1.500-3 .5 1-3-1.500-2.500L6 20z" fill="#16a2ea"/><circle cx="42" cy="4" r="2" fill="#f0592b"/><circle cx="60" cy="23.500" r="2" fill="#86c440"/></svg>
  </label>
  <button class="task"><svg class="t18" viewBox="0 0 18 18"><path d="M2 1v3h10V1M2 17v-3h10v3M2 6h10v6H2zM15 1v4M15 8v9" fill="none" stroke="#fff" stroke-width="1.300"/><path d="M14 5h3v3h-3z" fill="#fff"/></svg></button>
  <button class="task current"><svg><use href="#brave"/></svg></button>
  <button class="task"><svg viewBox="0 0 24 24"><path d="M2 22l1.500-5A9.800 9.800 0 1 1 7 20.800z" fill="none" stroke="#25d366" stroke-width="2"/><path d="M8.500 6.500c-3 2.500 3.500 11 8 9.500 2-1 1-2.500-1.500-3.500l-1.500 1.500c-1.500-.5-2.500-2-3-3.200l1-1.300C11 7.500 10 6 8.500 6.500z" fill="#25d366"/></svg><span class="bubble">37</span></button>
  <button class="task"><svg viewBox="0 0 24 24"><rect x="1" y="1" width="22" height="22" rx="1.500" fill="#0a66c2"/><path d="M5.500 10v9M10.500 19v-9M10.500 14c0-4.500 6-4.500 6 0v5" fill="none" stroke="#fff" stroke-width="3"/><circle cx="5.500" cy="6" r="1.900" fill="#fff"/></svg><span class="bubble">1</span></button>
  <button class="task"><svg viewBox="0 0 24 24"><circle cx="12" cy="12" r="11.500" fill="#fbc116"/><path d="M2 6.200A11.500 11.500 0 0 1 22 6.300L12 6.500v6z" fill="#e33b2e"/><path d="M2 6.200A11.500 11.500 0 0 0 11 23.400l5-9-8.500.8z" fill="#27a14b"/><circle cx="12" cy="12" r="5.500" fill="#fff"/><circle cx="12" cy="12" r="4.300" fill="#4285f4"/></svg></button>
  <button class="task open"><svg viewBox="0 0 24 24"><path d="M1 3h8l2 2.500h12V21H1z" fill="#e5a91b"/><path d="M1 7h22v14H1z" fill="#ffd45e"/><path d="M5 13h14v9h-3.500v-4h-7v4H5z" fill="#3d93dc"/></svg></button>
  <button class="task"><svg viewBox="0 0 24 24"><rect width="24" height="24" rx="5" fill="url(#insta)"/><rect x="4.500" y="4.500" width="15" height="15" rx="4.500" fill="none" stroke="#fff" stroke-width="2"/><circle cx="12" cy="12" r="3.500" fill="none" stroke="#fff" stroke-width="2"/><circle cx="16.500" cy="7.500" r="1.200" fill="#fff"/></svg></button>
  <button class="task"><svg viewBox="0 0 24 24"><circle cx="12" cy="12" r="12" fill="#000"/><path d="M12 5v9.500a2.700 2.700 0 1 1-2.500-2.700M12 5.500c.5 2.500 2 4 4.500 4" fill="none" stroke="#27e2dd" stroke-width="2.300"/><path d="M13.200 5.800v9.500a2.700 2.700 0 1 1-2.500-2.700M13.200 6.300c.5 2.500 2 4 4.500 4" fill="none" stroke="#f42a58" stroke-width="2"/><path d="M12.600 5.400v9.500a2.700 2.700 0 1 1-2.500-2.700M12.600 5.900c.5 2.500 2 4 4.500 4" fill="none" stroke="#fff" stroke-width="1.900"/></svg></button>
  <button class="task"><svg viewBox="0 0 24 24"><rect x="2" y="2" width="20" height="20" rx="4" fill="#fff"/><path d="M5.500 17L9 7l3.500 10M7 13.500h4M14 7l4 10" fill="none" stroke="#111" stroke-width="2"/></svg></button>
  <button class="task"><svg viewBox="0 0 24 24"><circle cx="12" cy="12" r="12" fill="url(#canvag)"/><path d="M16 8c0-3-5-3-7 2.500s.5 8 3.500 7c1.500-.5 2.500-1.500 3.500-3" fill="none" stroke="#fff" stroke-width="2"/></svg></button>
  <button class="task white"><svg><use href="#gpt"/></svg></button>
  <button class="task"><svg viewBox="0 0 24 24"><rect x="2" y="2" width="20" height="20" rx="4.500" fill="#050505"/><path d="M12 6l5 2.500v6L12 18l-5-3.500v-6z" fill="#b9b9b9"/><path d="M7 8.500h10L12 18v-6z" fill="#f0f0f0"/></svg></button>
  <button class="task"><svg viewBox="0 0 24 24"><rect width="24" height="24" rx="4" fill="#17191c"/><rect x="5" y="7" width="14" height="10" rx="1" fill="none" stroke="#2fe08a" stroke-width="2"/><path d="M8.500 12h2M13.500 12h2" stroke="#2fe08a" stroke-width="2"/></svg></button>
  <button class="task open"><svg viewBox="0 0 24 24"><circle cx="12" cy="12" r="11.500" fill="#7a2fb4"/><g color="#fff"><use href="#github" x="4" y="4" width="16" height="16"/></g></svg></button>
  <button class="task open"><svg viewBox="0 0 24 24"><path d="M1 1h22v7H1z" fill="#b3324f"/><path d="M1 8.500h22v7H1z" fill="#2c4fa3"/><path d="M1 16h22v7H1z" fill="#3d8a3e"/><path d="M8.500 0h7v24h-7z" fill="#c98627"/><path d="M3 2v20M20.500 2v20" stroke="#e3c468" stroke-width="1.500" stroke-dasharray="4 3.500"/><path d="M10 9h4v6h-4z" fill="#e9e2d2"/></svg></button>
  <div class="tray">
    <svg class="weather" viewBox="0 0 26 24"><path d="M18 8a8 8 0 1 1-14 8c8 1 12-2 14-8z" fill="#f39a1e"/><path d="M3 9a3 3 0 0 1 1-5.500 4.500 4.500 0 0 1 8-.5 3 3 0 0 1 1 6z" fill="#9cc3f5"/><path d="M13 21a3 3 0 0 1 1-5.500 4.500 4.500 0 0 1 7-.5 3 3 0 0 1 2 6z" fill="#9cc3f5"/><circle cx="19" cy="6" r="6" fill="#d02b20"/><text x="19" y="9" font-size="9" font-weight="700" fill="#fff" text-anchor="middle">6</text></svg>
    <span>26°C</span><span class="cloudy" dir="rtl">غائم جزئيًا</span>
    <svg class="t16" viewBox="0 0 16 16"><path d="M2 11l6-6 6 6" fill="none" stroke="#fff" stroke-width="1.400"/></svg>
    <svg class="t18" viewBox="0 0 18 18"><path d="M2 6.500h2.500l3.500-3v11l-3.500-3H2zM10.500 6.500c1.200 1.500 1.200 3.500 0 5M12.700 5c2.200 2.500 2.200 5.500 0 8M15 3.500c3 3.500 3 7.500 0 11" fill="none" stroke="#fff" stroke-width="1.100"/></svg>
    <span class="lang">ENG</span>
    <time class="clock">12:43 AM<br>09/08/2025</time>
    <button class="notes"><svg viewBox="0 0 16 16"><path d="M0 1h16v11h-6l-3 3v-3H0z" fill="#fff"/><path d="M3 4.500h10M3 6.500h10M3 8.500h7" stroke="#333"/></svg><span class="bubble">9</span></button>
  </div>
</footer>
</body>
</html>
```
FILE: styles.css
```css
* { box-sizing: border-box; }
body {
  margin: 0; height: 100vh; overflow: hidden; position: relative;
  display: flex; flex-direction: column;
  font: 11px/20px Roboto, "Noto Sans", sans-serif; color: #0e1525; background: #fcfcfc;
}
.sprite { position: absolute; width: 0; height: 0; }
button { font: inherit; color: inherit; border: 0; background: none; padding: 0; display: inline-flex; align-items: center; justify-content: center; flex: none; }
input { font: inherit; color: inherit; border: 0; background: none; padding: 0; outline: 0; min-width: 0; }
svg { flex: none; display: block; width: 16px; height: 16px; }
p, h1, h2, h3, h4, ul { margin: 0; padding: 0; font-size: inherit; font-weight: 400; }
ul { list-style: none; }
a { color: inherit; text-decoration: none; }
.grey { color: #7d7d7d; }

/* Browser chrome */
.browser { flex: none; font-family: "Open Sans", "Noto Sans", "DejaVu Sans", sans-serif; font-size: 12px; color: #3c3f46; background: #fff; border-bottom: 1px solid #dedee2; }
.tabs { display: flex; align-items: center; height: 40px; background: #e3e2e7; }
.tab { position: relative; width: 39px; height: 32px; }
.tab svg { width: 20px; height: 20px; }
.tab-run .tab::after { content: ""; position: absolute; right: 0; top: 8px; height: 16px; width: 1px; background: #cbcad0; }
.tab.tight { width: 38px; }
.tab.first { width: 42px; }
.tab.active::before { content: ""; position: absolute; inset: 0 2px; background: #fff; border-radius: 8px; }
.tab.active svg { position: relative; }
.tab-run .tab.active::after { display: none; }
.group { width: 33px; height: 32px; border-radius: 8px; background: #d9cbec; color: #a44df0; font-size: 14px; margin-right: 2px; }
.tab-run { display: flex; position: relative; }
.tab-run::before { content: ""; position: absolute; left: -33px; top: 34px; width: 380px; height: 2px; background: #bf80f0; }
.window-controls { margin-left: auto; display: flex; }
.window-controls button { width: 46px; height: 40px; }

.toolbar { display: flex; align-items: center; height: 40px; padding: 0 6px 0 7px; }
.tool { width: 30px; height: 30px; }
.toolbar svg { width: 20px; height: 20px; }
.toolbar .tool svg { width: 18px; height: 18px; }
.mark { margin-left: 232px; }
.address { flex: 1; display: flex; align-items: center; height: 32px; margin: 0 148px 0 8px; padding: 0 3px 0 6px; background: #edecf2; border-radius: 8px; }
.address input { flex: 1; margin-left: 12px; font-size: 13px; color: #33353d; }
.address .wide { width: 34px; height: 32px; position: relative; }
.toolbar .big { width: 20px; height: 24px; }
.bar-line { width: 1px; height: 20px; background: #b5b5bd; }
.bar-line.light { background: #dcdce2; width: 2px; }
.count { position: absolute; top: 3px; right: 1px; width: 12px; height: 12px; border-radius: 4px; background: #5f636e; color: #fff; font: 700 9px/12px "Open Sans", sans-serif; }
.extensions { display: flex; align-items: center; }
.extensions button { width: 30px; height: 30px; }
.extensions .bar-line { margin: 0 8px 0 9px; }

.bookmarks { display: flex; align-items: center; height: 34px; padding: 0 14px 4px 6px; }
.bookmarks svg { width: 18px; height: 18px; }
.ai-chip { width: 30px; height: 20px; border: 1px solid #b777f2; border-radius: 4px; background: #ecdcfb; color: #9a45ee; }
.grid-btn { width: 44px; }
.marks { display: flex; margin-left: 13px; }
.marks a { display: flex; align-items: center; gap: 5px; width: 154px; white-space: nowrap; }
.marks .short { width: 94px; }
.marks .no-icon { padding-right: 17px; }
.marks a.grey svg { color: #5a5d63; }
.marks a.grey { color: inherit; }
.more { margin-left: auto; margin-right: 13px; }
.all { display: flex; align-items: center; gap: 5px; margin-left: 14px; }
.bookmarks .more svg { width: 16px; height: 16px; }

.page-scroll { position: absolute; right: -6px; top: 97px; width: 13px; height: 332px; border: 1px solid #b5b5b8; border-radius: 7px; background: #e9e9eb; z-index: 2; }

/* Workspace shell */
.app { flex: 1; min-height: 0; display: flex; padding-bottom: 5px; }
.sidebar { width: 416px; flex: none; display: flex; flex-direction: column; padding-left: 6px; padding-right: 5px; }
.s12 { width: 12px; height: 12px; }

.project { display: flex; align-items: center; height: 36px; padding-left: 8px; }
.logo { width: 12px; height: 14px; margin-right: 2px; }
.app-icon { display: flex; align-items: center; justify-content: center; width: 14px; height: 14px; margin: 0 6px 0 12px; border: 1px solid #cfd2d6; border-radius: 2px; background: #eef0f2; }
.app-icon svg { width: 10px; height: 10px; }
.app-name { width: 65px; font-size: 13px; }
.square { width: 11px; height: 11px; background: #5c6068; border: 2px solid #a596e8; margin-right: 13px; }
.meter { width: 45px; height: 8px; border: 1px solid #c5c8cc; border-radius: 4px; background: #eef0f2; margin-right: 10px; overflow: hidden; }
.meter span { display: block; width: 6px; height: 6px; background: #6bb3ff; }
.blue-btn { gap: 5px; height: 25px; padding: 0 8px; border-radius: 4px; background: #6bb3ff; }
.blue-btn svg { width: 12px; height: 12px; }
.upgrade { width: 72px; margin-bottom: 4px; }

.chat-title { display: flex; align-items: center; justify-content: space-between; height: 32px; padding: 0 8px 0 6px; color: #333; }
.chat-title svg { width: 14px; height: 14px; }
.chat-title h1 { font-size: 13px; color: #0e1525; }

.chat { flex: 1; min-height: 0; overflow: hidden; padding: 0 5px 0 3px; }
.chat svg { width: 14px; height: 14px; }
.card { border: 1px solid #d3d5d8; border-radius: 7px; }
.worked { display: flex; align-items: flex-start; height: 21px; padding: 0 7px 0 11px; line-height: 12px; border-top: 0; border-radius: 0 0 7px 7px; color: #5a5f66; }
.worked span { margin-left: 8px; }
.chat .worked svg { height: 12px; }
.end { margin-left: auto; }

.checkpoint { display: flex; height: 98px; margin-top: 15px; padding: 9px 10px 0 10px; border-color: #adc8b6; }
.checkpoint .ok { color: #2c8442; margin-top: 3px; }
.cp-body { flex: 1; margin-left: 8px; }
.cp-meta { color: #4b5056; }
.cp-title { margin: 3px 0 7px; font-size: 13px; white-space: nowrap; }
.cp-title .pen { display: inline-block; vertical-align: -3px; color: #bbb; margin-left: 2px; }
.cp-actions { display: flex; gap: 7px; }
.cp-actions button { height: 26px; padding: 0 8px; gap: 4px; border: 1px solid #adc8b6; border-radius: 3px; }
.chat .cp-actions svg { width: 11px; height: 11px; }
.chat .thumb { width: 90px; height: 65px; margin-top: 6px; border: 1px solid #c3c6ca; border-radius: 4px; }
.second { height: 118px; margin-top: 7px; }
.chat .second .thumb { margin-top: 16px; }

.message { margin: 32px 3px 0 34px; font-size: 13px; text-align: right; }
.message p { padding: 6px 7px 5px; border-radius: 3px; background: #97c7f8; text-align: left; white-space: nowrap; }
.message time { display: block; margin-top: 3px; font-size: 12px; color: #5a5f66; }

.step { display: flex; align-items: center; height: 27px; padding: 0 5px 0 4px; font-size: 13px; color: #4b5056; }
.step span { margin-left: 6px; }
.message + .step { margin-top: 13px; }
.reply { margin: 9px 0 8px; padding-left: 5px; font-size: 13px; white-space: nowrap; }
.tasks { margin-top: 3px; font-size: 13px; }
.tasks li { height: 28px; padding: 4px 7px; background: #eff1f3; border-radius: 3px; }
.tasks li + li { margin-top: 1px; }

.usage { margin-top: 13px; padding: 2px 10px 7px; }
.row { display: flex; justify-content: space-between; align-items: center; height: 24px; }
.row.muted { color: #4b5056; height: 28px; }
.row span { display: flex; align-items: center; gap: 7px; }
.row svg { color: #666; }

.composer { border: 1px solid #c3c6ca; border-radius: 6px; background: #eff1f3; margin-right: 1px; }
.composer label { display: block; height: 24px; padding: 2px 12px; color: #4b5056; }
.composer-box { border-top: 1px solid #adb0b5; padding: 6px; }
.composer input { display: block; width: 100%; height: 20px; padding-left: 3px; font-size: 13px; }
.composer input::placeholder { color: #6d727a; opacity: 1; }
.composer-tools { display: flex; align-items: center; margin-top: 13px; height: 21px; gap: 11px; color: #4b5056; }
.composer-tools svg { width: 14px; height: 14px; }
.composer-tools .build { width: 71px; height: 21px; gap: 4px; background: #e3e5e8; border-radius: 3px; color: #0e1525; margin-right: -3px; }
.composer-tools .build .s12 { width: 10px; height: 10px; margin-left: 6px; }
.composer-tools .push { margin-left: auto; margin-right: 5px; }
.composer-tools button:last-child { margin-right: 3px; }

.workspace { flex: 1; min-width: 0; display: flex; flex-direction: column; padding-right: 5px; }
.panes { display: flex; align-items: center; height: 36px; }
.panes svg { width: 14px; height: 14px; }
.pane-tab { width: 144px; height: 26px; padding: 0 7px 0 5px; gap: 6px; justify-content: flex-start; border-radius: 4px; font-size: 13px; color: #4b5056; }
.pane-tab.on { background: #eff0f2; color: #0e1525; }
.panes .x { width: 12px; height: 12px; margin-left: auto; color: #8a8d92; }
.pane-tab + .pane-tab { padding-left: 10px; padding-right: 3px; }
.panes .faint { color: #bbb; }
.icon-btn { width: 29px; height: 26px; color: #333; }
.add { margin-left: 4px; }
.pane-right { display: flex; margin-left: auto; margin-right: -2px; }
.deploy { width: 66px; height: 26px; gap: 4px; border-radius: 4px; background: #eff0f2; margin: 0 1px; }
.panes .deploy svg { width: 11px; height: 11px; }

.webview { flex: 1; min-height: 0; display: flex; flex-direction: column; border: 1px solid #adb0b5; border-radius: 4px; overflow: hidden; background: #fff; margin-right: 1px; }
.urlbar { display: flex; align-items: center; height: 31px; padding: 0 1px; background: #fcfcfc; color: #222; }
.urlbar > button { width: 24px; height: 24px; }
.urlbar svg { width: 13px; height: 13px; }
.urlbar .dim { color: #6d727a; }
.urlbar > .again { width: 28px; }
.url { flex: 1; display: flex; align-items: center; height: 22px; margin: 0 2px 0 1px; padding-left: 4px; background: #eff0f2; border-radius: 3px; font-size: 13px; color: #5a5f66; }
.urlbar .url svg { width: 11px; height: 11px; margin-right: 1px; }
.url b { font-weight: 400; font-size: 12px; color: #0e1525; }
.banner { display: flex; align-items: center; height: 33px; padding: 0 8px 0 4px; background: #b2d8ff; color: #14528a; }
.banner > svg { width: 14px; height: 14px; margin-right: 8px; }
.banner .blue-btn { margin-left: 5px; color: #0e1525; }
.dismiss { margin-left: auto; }
.dismiss svg { width: 14px; height: 14px; }

.frame { flex: 1; min-height: 0; display: flex; }
.track { width: 13px; background: #fafafa; display: flex; flex-direction: column; align-items: center; justify-content: space-between; padding: 6px 0 5px; }
.track i { border: 4px solid transparent; }
.track .up { border-top: 0; border-bottom: 5px solid #8b8b8b; }
.track .down { border-bottom: 0; border-top: 5px solid #8b8b8b; }
.track .thumb-bar { border: 0; width: 9px; height: 84%; margin: 6px 0 auto; border-radius: 5px; background: #8f8f8f; }
.canvas { flex: 1; min-width: 0; overflow: hidden; display: flex; justify-content: center; padding-left: 2px; }

/* Previewed lesson */
.phone { width: 404px; flex: none; font: 13px/18px Inter, "Noto Sans", "DejaVu Sans", sans-serif; background: #fff; box-shadow: 0 20px 30px rgba(0, 0, 0, .06); height: 1000px; white-space: nowrap; }
.hero { height: 137px; padding: 43px 22px 0; background: linear-gradient(135deg, #e0eaf2, #e3e3f0 45%, #e8deeb); color: #20242e; }
.back { width: 24px; height: 22px; }
.back svg { width: 20px; height: 20px; }
.hero-title { display: flex; align-items: center; margin-top: 11px; }
.badge { display: flex; align-items: center; justify-content: center; width: 29px; height: 29px; border-radius: 50%; background: #3b82f6; color: #fff; }
.badge svg { width: 15px; height: 15px; }
.hero h2 { font-size: 18px; line-height: 28px; font-weight: 500; }
.lesson { margin: 21px 22px 0; height: 900px; padding: 22px; border: 1px solid #e5e7eb; border-radius: 14px; }
.lesson h3 { font-size: 16px; line-height: 24px; font-weight: 500; color: #20242e; }
.body { margin-top: 13px; line-height: 22px; color: #64748b; }
.tip { margin-top: 14px; height: 238px; padding: 40px 14px; border-radius: 11px; }
.body + .tip { margin-top: 13px; }
.tip h4 { font-size: 16px; line-height: 24px; font-weight: 500; margin-bottom: 7px; }
.blue { background: #eff6ff; color: #1d4ed8; }
.blue h4 { color: #1e40af; }
.green { background: #f0fdf4; color: #15803d; }
.green h4 { color: #166534; }
.tip ul { list-style: disc; padding-right: 25px; }
.tip li + li { margin-top: 3px; }
.tip li::marker { content: "•\a0\a0\a0\a0"; color: #d1d5db; }

/* Windows taskbar */
.taskbar { flex: none; display: flex; height: 40px; color: #fff; font: 12px/18px "Open Sans", "Noto Sans", "DejaVu Sans", sans-serif; background: linear-gradient(90deg, #202224 0, #26292a 20%, #2c2826 32%, #474747 44%, #474747 70%, #352d2b 84%, #332a29 92%, #2b2c2a 100%); }
.start { width: 48px; }
.find { display: flex; align-items: center; width: 288px; background: #f1f1f1; border: 1px solid #bcbcbc; color: #333; padding: 0 9px 0 11px; }
.find input { flex: 1; margin-left: 12px; font-size: 15px; }
.find input::placeholder { color: #3a3a3a; opacity: 1; }
.find .sparkles { width: 64px; height: 28px; }
.task { width: 49px; position: relative; border-bottom: 2px solid transparent; }
.task svg { width: 24px; height: 24px; }
.task.white { color: #f2f2f2; }
.task .t18, .t18 { width: 18px; height: 18px; }
.find + .task { width: 50px; }
.current { background: #545454; border-color: #76b9ed; }
.open::after { content: ""; position: absolute; left: 4px; right: 4px; bottom: -2px; height: 2px; background: #76b9ed; }
.bubble { position: absolute; right: 1px; bottom: 3px; min-width: 17px; height: 19px; padding: 0 2px; border: 1px solid #999; border-radius: 10px; background: #2d3233; font-size: 12px; line-height: 17px; font-weight: 600; }
.tray { margin-left: auto; display: flex; align-items: center; padding-right: 4px; }
.tray span { white-space: nowrap; }
.weather { width: 26px; height: 24px; margin-right: 7px; }
.tray > span { font-size: 13px; }
.cloudy { margin: 0 23px 0 11px; }
.tray .t18 { margin: 0 9px 0 8px; }
.tray .lang { font-size: 12px; }
.clock { width: 84px; text-align: center; }
.notes { position: relative; width: 43px; height: 40px; border-right: 1px solid #777; padding-right: 10px; }
.notes .bubble { right: 12px; bottom: 3px; }
```
